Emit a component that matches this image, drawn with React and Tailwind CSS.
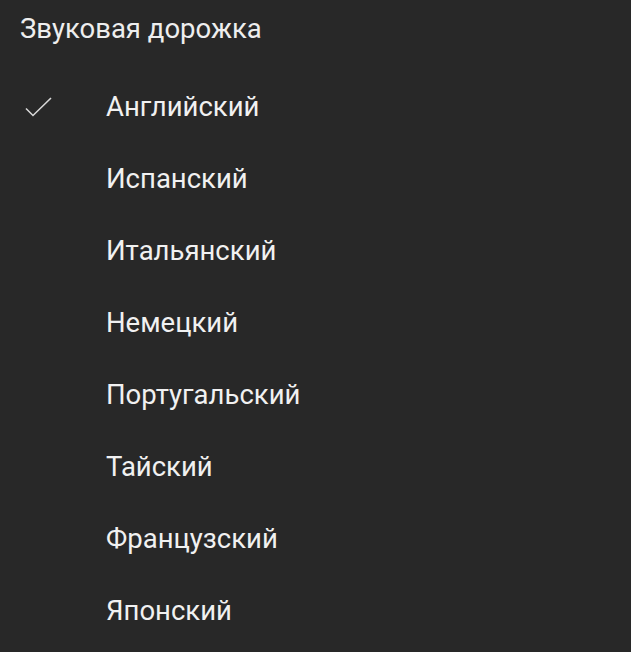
import React from 'react'

const languages = [
	"Английский",
	"Испанский",
	"Итальянский",
	"Немецкий",
	"Португальский",
	"Тайский",
	"Французский",
	"Японский",
]

const Check = () => (
	<svg width="28" height="22" viewBox="0 0 28 22" fill="none" className="text-[#d8d8d8]">
		<path d="M2 12.5 L9 19.5 L27 2" stroke="currentColor" strokeWidth="1.6" />
	</svg>
)

const App = () => {
	const selected = "Английский"

	return (
		<div className="w-[631px] h-[652px] bg-[#282828] text-[#f1f1f1] font-['Roboto',sans-serif] overflow-hidden">
			<div className="pl-[20px] pt-[13px] text-[27.5px] leading-[32px] text-[#eeeeee]">Звуковая дорожка</div>

			<ul className="mt-[25.5px]">
				{languages.map((lang) => (
					<li key={lang} className="h-[72px] flex items-center">
						<div className="w-[106px] pl-[24px] flex items-center">
							{lang === selected && <Check />}
						</div>
						<span className="text-[27.5px] leading-[32px]">{lang}</span>
					</li>
				))}
			</ul>
		</div>
	)
}

export default App
